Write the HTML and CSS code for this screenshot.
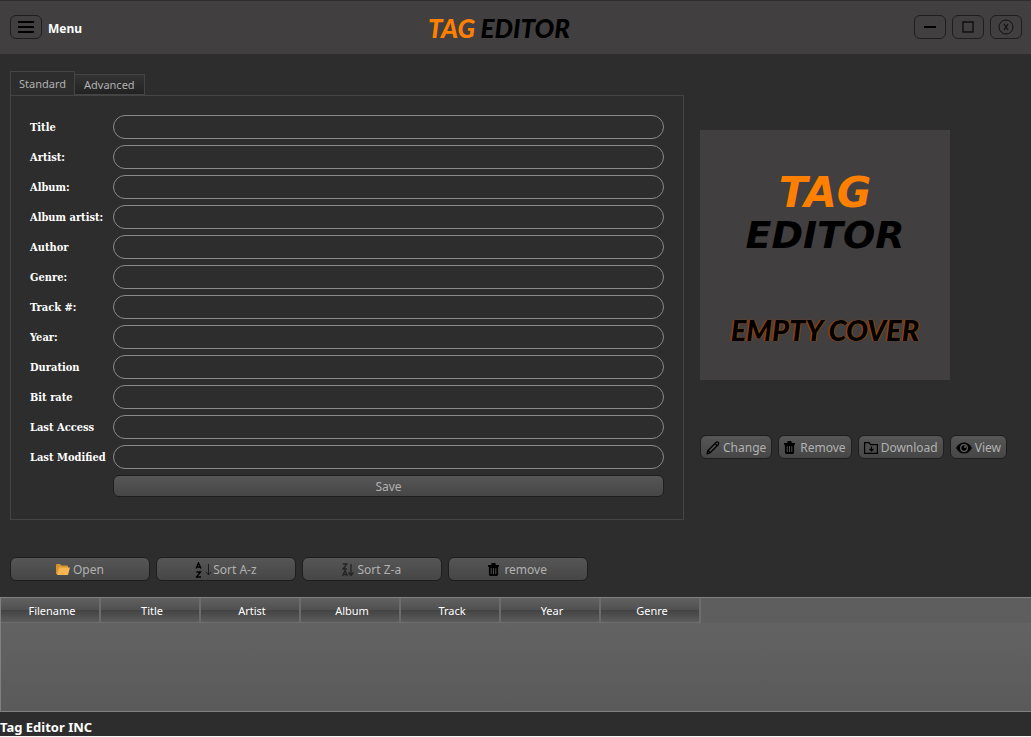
FILE: index.html
```html
<!DOCTYPE html>
<html lang="en">
<head>
<meta charset="utf-8">
<title>Tag Editor</title>
<link rel="stylesheet" href="styles.css">
</head>
<body>
<div class="app">
  <header class="titlebar">
    <div class="menu">
      <button class="frame-btn" id="menu-btn" aria-label="Menu"><svg width="18" height="14" viewBox="0 0 18 14"><path d="M1 2h16M1 7h16M1 12h16" stroke="#000" stroke-width="2"/></svg></button>
      <label class="menu-label" for="menu-btn">Menu</label>
    </div>
    <h1 class="brand"><span class="orange">TAG</span> EDITOR</h1>
    <div class="window-controls">
      <button class="frame-btn" aria-label="Minimize"><svg width="16" height="16" viewBox="0 0 16 16"><path d="M2 8h12" stroke="#000" stroke-width="2"/></svg></button>
      <button class="frame-btn" aria-label="Maximize"><svg width="16" height="16" viewBox="0 0 16 16"><path d="M3 3h10v10H3z" fill="none" stroke="#111" stroke-width="1.4"/></svg></button>
      <button class="frame-btn" aria-label="Close"><svg width="16" height="16" viewBox="0 0 16 16" fill="none" stroke="#111"><circle cx="8" cy="8" r="7"/><path d="M6 5l4 6M10 5l-4 6" stroke-width="1.2"/></svg></button>
    </div>
  </header>

  <main class="main">
    <section class="editor">
      <div class="tabs" role="tablist">
        <button class="tab active" role="tab" aria-selected="true">Standard</button>
        <button class="tab" role="tab" aria-selected="false">Advanced</button>
      </div>
      <form class="panel">
        <label for="title">Title</label><input id="title" type="text">
        <label for="artist">Artist:</label><input id="artist" type="text">
        <label for="album">Album:</label><input id="album" type="text">
        <label for="album-artist">Album artist:</label><input id="album-artist" type="text">
        <label for="author">Author</label><input id="author" type="text">
        <label for="genre">Genre:</label><input id="genre" type="text">
        <label for="track">Track #:</label><input id="track" type="text">
        <label for="year">Year:</label><input id="year" type="text">
        <label for="duration">Duration</label><input id="duration" type="text">
        <label for="bitrate">Bit rate</label><input id="bitrate" type="text">
        <label for="access">Last Access</label><input id="access" type="text">
        <label for="modified">Last Modified</label><input id="modified" type="text">
        <button class="btn save" type="button">Save</button>
      </form>
    </section>

    <aside class="side">
      <div class="cover">
        <div class="cover-brand"><span class="cover-tag orange">TAG</span><span class="cover-editor">EDITOR</span></div>
        <span class="cover-empty">EMPTY COVER</span>
      </div>
      <div class="cover-actions">
        <button class="btn"><svg width="14" height="14" viewBox="0 0 14 14" fill="none" stroke="#000" stroke-width="1.2" stroke-linejoin="round"><path d="M1 13l1-3.500 8-8q1.200-1 2.200-.2t.2 2.200l-8 8z"/><path d="M9.500 3l1.800 1.800M2 9.500l2.500 2.500"/></svg>Change</button>
        <button class="btn trash"><svg width="11" height="13" viewBox="0 0 12 14"><path d="M0 2h3.500l.5-2h4l.5 2H12v2H0zM1 4h10v8.500q0 1.500-1.500 1.500h-7Q1 14 1 12.500z"/><path d="M3.500 5.500v6.500M6 5.500v6.500M8.500 5.500v6.500" stroke="#555"/></svg>Remove</button>
        <button class="btn"><svg width="14" height="12" viewBox="0 0 14 12" fill="none" stroke="#000" stroke-width="1.200"><path d="M.6.6h4.400l1.500 2h6.900v8.800H.6z"/><path d="M7.500 4.500v4M5.500 7l2 2 2-2"/></svg>Download</button>
        <button class="btn"><svg width="16" height="12" viewBox="0 0 16 12"><path d="M0 6Q3 .5 8 .5T16 6Q13 11.500 8 11.500T0 6z"/><circle cx="8" cy="6" r="3.300" fill="none" stroke="#606060" stroke-width="1.300"/><circle cx="9" cy="5" r="1" fill="#606060"/></svg>View</button>
      </div>
    </aside>
  </main>

  <div class="toolbar">
    <button class="btn"><svg width="14" height="11" viewBox="0 0 14 11"><path d="M0 1q0-1 1-1h3l1.500 1.500H11q1 0 1 1V10H0z" fill="#d8942c"/><path d="M3 3.500h11L12 11H1z" fill="#f6b552"/></svg>Open</button>
    <button class="btn sort"><svg width="18" height="16" viewBox="0 0 18 16" fill="none" stroke="#000" stroke-width="1.300"><path d="M1 6.500L3.500 1 6 6.500M2 5h3M1.500 10h4L1.500 15h4.500"/><path d="M13.500 2v11M11 10l2.500 3 2.500-3" stroke="#1c1c1c" stroke-width="1"/></svg>Sort A-z</button>
    <button class="btn"><svg width="12" height="14" viewBox="0 0 12 14" fill="none" stroke="#242424" stroke-width="1.300"><path d="M.8 1h4L1 6h4M.5 13L3 7.500 5.500 13M1.500 11.500h3M9 1v11M6.500 9.500L9 12.500l2.500-3"/></svg>Sort Z-a</button>
    <button class="btn trash"><svg width="11" height="13" viewBox="0 0 12 14"><path d="M0 2h3.500l.5-2h4l.5 2H12v2H0zM1 4h10v8.500q0 1.500-1.500 1.500h-7Q1 14 1 12.500z"/><path d="M3.500 5.500v6.500M6 5.500v6.500M8.500 5.500v6.500" stroke="#555"/></svg>remove</button>
  </div>

  <div class="files">
    <table class="file-table">
      <thead><tr><th>Filename</th><th>Title</th><th>Artist</th><th>Album</th><th>Track</th><th>Year</th><th>Genre</th><td class="rest"></td></tr></thead>
    </table>
  </div>
  <footer class="status">Tag Editor INC</footer>
</div>
</body>
</html>
```
FILE: styles.css
```css
* { box-sizing: border-box; }
body {
  margin: 0;
  background: #2d2d2d;
  color: #b1b1b1;
  font: 12px/16px "Noto Sans", "Open Sans", sans-serif;
}
button, input { font: inherit; color: inherit; margin: 0; }
svg { flex: none; }
.app {
  display: flex;
  flex-direction: column;
  min-height: 100vh;
  border-bottom: 1px solid #f4f6fa;
}

.titlebar {
  display: grid;
  grid-template-columns: 1fr auto 1fr;
  align-items: center;
  height: 54px;
  padding: 0 9px 0 10px;
  border-top: 1px solid #2d2d2d;
  background: #413f3f;
}
.menu { display: flex; align-items: center; gap: 6px; }
.menu-label { color: #fff; font-weight: 700; padding-top: 2px; }
.frame-btn {
  display: flex;
  align-items: center;
  justify-content: center;
  width: 32px;
  height: 24px;
  padding: 0;
  border: 1px solid #1e1e1e;
  border-radius: 6px;
  background: none;
}
.window-controls { display: flex; justify-content: flex-end; gap: 6px; }
.titlebar .frame-btn { margin-bottom: 2px; }
.brand {
  margin: 0;
  padding-right: 34px;
  color: #000;
  font: italic 900 26px/28px Lato, sans-serif;
}
.orange { color: #ff8000; }

.main { display: flex; gap: 16px; padding: 17px 0 0 10px; }
.editor { flex: 1; min-width: 0; }
.tabs { display: flex; align-items: flex-end; height: 24px; font-size: 11px; }
.tab {
  height: 21px;
  padding: 0 9px;
  border: 1px solid #444;
  border-left: 0;
  background: linear-gradient(#343434, #222);
}
.tab.active {
  height: 24px;
  padding: 1px 8px 0;
  border-left: 1px solid #444;
  border-bottom: 0;
  background: #2d2d2d;
}
.panel {
  display: grid;
  grid-template-columns: 77px 1fr;
  gap: 6px;
  align-items: center;
  padding: 19px 19px 22px;
  border: 1px solid #444;
}
.panel label {
  padding-top: 2px;
  color: #fff;
  font: 700 11px/16px "DejaVu Serif Condensed", "DejaVu Serif", serif;
  font-stretch: condensed;
  white-space: nowrap;
}
.panel input {
  width: 100%;
  height: 24px;
  padding: 0 12px;
  border: 1px solid #8a8a8a;
  border-radius: 12px;
  background: transparent;
}
.btn {
  display: flex;
  align-items: center;
  justify-content: center;
  gap: 3px;
  height: 24px;
  padding: 1px 5px 0;
  border: 1px solid #1e1e1e;
  border-radius: 6px;
  background: linear-gradient(#565656, #464646);
  white-space: nowrap;
}
.panel .save { grid-column: 2; height: 22px; }

.side { width: 331px; padding-top: 59px; }
.cover {
  display: flex;
  flex-direction: column;
  align-items: center;
  justify-content: space-between;
  width: 250px;
  height: 250px;
  padding: 42px 0 32px;
  background: #413f3f;
}
.cover-brand {
  display: flex;
  flex-direction: column;
  align-items: center;
  color: #000;
  font: italic 700 38px/42px "DejaVu Sans", sans-serif;
}
.cover-tag { font-size: 42px; }
.cover-empty {
  color: #000;
  font: italic 900 29px/36px Lato, sans-serif;
  text-shadow: 1px 0 1px #a4480c, -1px 0 1px #a4480c;
}
.cover-actions { display: flex; gap: 6px; margin-top: 55px; }
.btn.trash { gap: 5px; }

.toolbar {
  display: grid;
  grid-template-columns: repeat(4, 1fr);
  gap: 6px;
  width: 57%;
  margin: 37px 0 16px;
  padding-left: 10px;
}
.toolbar .sort { gap: 0; }

.files {
  flex: 1;
  border: 1px solid #808080;
  border-right: 0;
  background: linear-gradient(#656565, #5a5a5a);
}
.file-table {
  width: 100%;
  table-layout: fixed;
  border-collapse: separate;
  border-spacing: 0;
}
.file-table th {
  width: 100px;
  height: 25px;
  padding: 2px 0 0 4px;
  border-right: 2px solid #6c6c6c;
  border-bottom: 1px solid #6c6c6c;
  background: linear-gradient(#616161, #505050 50%, #434343 51%, #5c5c5c);
  color: #fff;
  font-size: 11px;
  font-weight: 400;
}
.rest { background: #5e5e5e; }
.status {
  height: 24px;
  padding-top: 7px;
  color: #fff;
  font-size: 13px;
  font-weight: 700;
}
```
